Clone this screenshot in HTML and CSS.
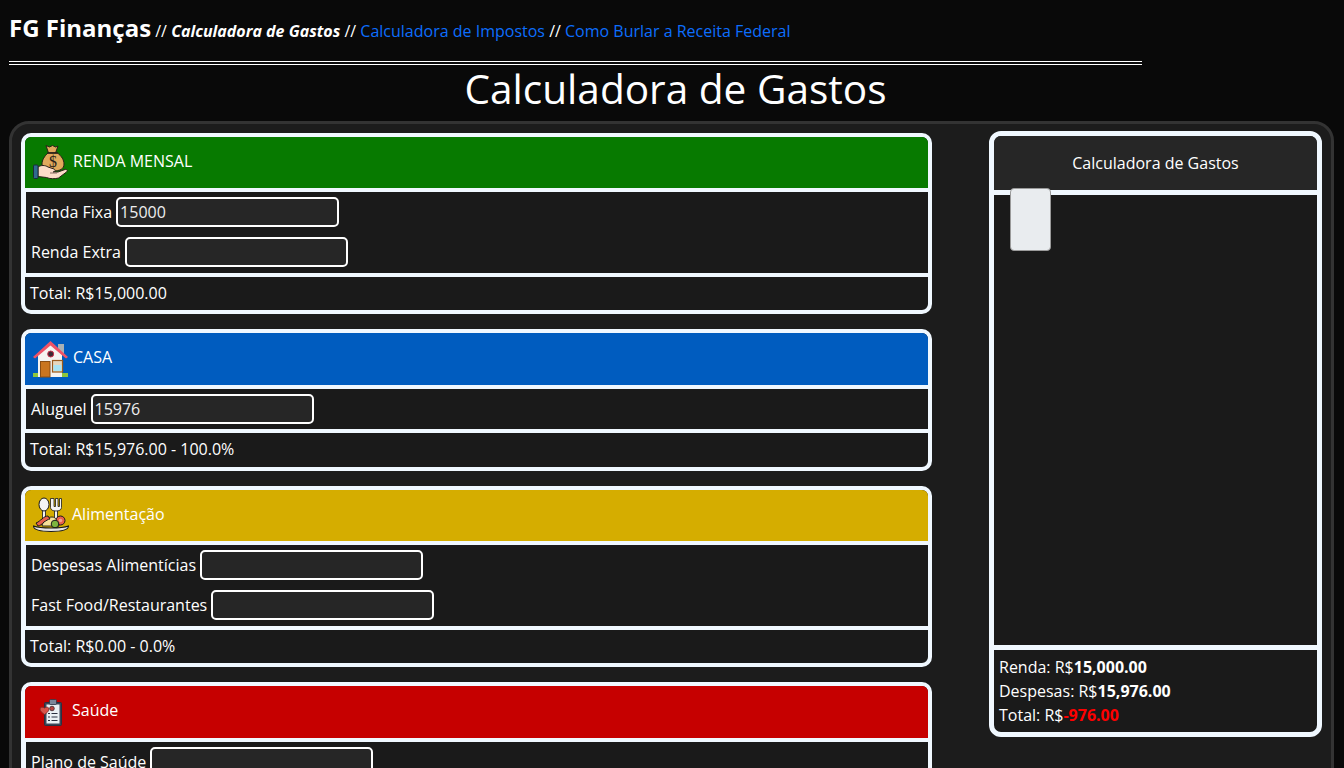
FILE: index.html
```html
<!DOCTYPE html>
<html lang="en">
<head>
    <meta charset="UTF-8">
    <title>Calculadora de Gastos</title>
    <link rel="stylesheet" href="styles.css">
</head>
<body>
    <!-- Top navigation -->
    <header class="site-header">
        <nav class="site-nav">
            <strong class="brand">FG Finanças</strong> // <b><i>Calculadora de Gastos</i></b> // <a href="#">Calculadora de Impostos</a> // <a href="#">Como Burlar a Receita Federal</a>
        </nav>
        <hr class="double-rule">
    </header>
    <h1 class="page-title">Calculadora de Gastos</h1>

    <main class="panel">
        <section class="categories">
            <!-- Renda -->
            <div class="card">
                <div class="card-header header-green">
                    <svg class="card-icon" viewBox="0 0 36 38">
                        <path d="M13 2.500l3.500 1.500 3-1.500 3 1.500 2.500-1-2.500 7h-7z" fill="#e0a95c" stroke="#2a2018" stroke-width="1"/>
                        <path d="M15 10h9.500c4 3 6.500 7 6.500 11 0 5-4 7-11 7s-11-2-11-7c0-4 2.500-8 6-11z" fill="#e0a95c" stroke="#2a2018" stroke-width="1"/>
                        <path d="M14.500 10h10.500" stroke="#2a2018" stroke-width="1.600"/>
                        <text class="bag-sign" x="20" y="24" text-anchor="middle">$</text>
                        <path d="M5 24c3-2 7-2 10 0l6 2c2 1 1 3-1 3h5l7-2.500c2-.5 3 1 1.500 2.500l-8 6c-3 1-9 1-12-.5l-8.500-1z" fill="#fbdcc8" stroke="#2a2018" stroke-width="1"/>
                        <path d="M17 30h7" stroke="#8a6a60" stroke-width="1.200"/>
                        <rect x="0.500" y="22" width="4.500" height="13.500" rx="1" fill="#2f6a8f" stroke="#1c2c38"/>
                    </svg>
                    <span>RENDA MENSAL</span>
                </div>
                <div class="card-body">
                    <div class="field"><label>Renda Fixa</label><input type="text" value="15000"></div>
                    <div class="field"><label>Renda Extra</label><input type="text"></div>
                </div>
                <div class="card-footer">Total: R$15,000.00</div>
            </div>

            <!-- Casa -->
            <div class="card">
                <div class="card-header header-blue">
                    <svg class="card-icon" viewBox="0 0 36 38">
                        <rect x="25" y="4" width="6" height="11" fill="#a9b1b5"/>
                        <rect x="0" y="33" width="35" height="4" fill="#8fc63c"/>
                        <path d="M17.500 4L29 15v22H5V15z" fill="#f5f3f0"/>
                        <path d="M0 17L17.500 1 35 17l-2 1.500L17.500 5.500 2 18.500z" fill="#ef5366"/>
                        <circle cx="17.700" cy="14" r="3" fill="#3b2a33" stroke="#c9304a"/>
                        <rect x="7.500" y="21.500" width="9.500" height="15.500" fill="#c9751f" stroke="#8a4e14"/>
                        <rect x="19.500" y="20.500" width="10" height="11.500" fill="#e6d6bc" stroke="#9a5a1c" stroke-width="1.200"/>
                        <rect x="20.500" y="25" width="8" height="6" fill="#a8e3f2"/>
                    </svg>
                    <span>CASA</span>
                </div>
                <div class="card-body">
                    <div class="field"><label>Aluguel</label><input type="text" value="15976"></div>
                </div>
                <div class="card-footer">Total: R$15,976.00 - 100.0%</div>
            </div>

            <!-- Alimentacao -->
            <div class="card">
                <div class="card-header header-yellow">
                    <svg class="card-icon" viewBox="0 0 36 38">
                        <rect x="9.500" y="12" width="3" height="12" fill="#f4f4f4" stroke="#1a1a1a" stroke-width=".8"/>
                        <ellipse cx="11" cy="8.500" rx="5" ry="6.500" fill="#f4f4f4" stroke="#1a1a1a"/>
                        <rect x="21.500" y="13" width="3" height="11" fill="#f4f4f4" stroke="#1a1a1a" stroke-width=".8"/>
                        <path d="M17.500 2.500v9c0 2.500 2.500 3.500 5.500 3.500s5.500-1 5.500-3.500v-9h-2v8h-1.500v-8h-2.500v8h-1.500v-8z" fill="#f4f4f4" stroke="#1a1a1a" stroke-width=".8"/>
                        <path d="M9 30c1-5 5-9 10-9 4 0 6 4 7 9z" fill="#f6e29a" stroke="#1a1a1a" stroke-width=".9"/>
                        <path d="M3 27c3-1 4-3 6-4 2-2 4-3 6-3l2 3c-2 0-4 2-6 3-2 2-4 4-6 4z" fill="#e8604c" stroke="#1a1a1a"/>
                        <circle cx="27.500" cy="24.500" r="4.500" fill="#e8604c" stroke="#1a1a1a"/>
                        <circle cx="27.500" cy="24.500" r="1.800" fill="#f2a08f"/>
                        <circle cx="22" cy="28" r="3.800" fill="#7db53f" stroke="#1a1a1a"/>
                        <path d="M.5 30c0 4 7 5.500 17.500 5.500s17.500-1.500 17.500-5.500c-4 1.500-9 2-17.500 2S4.500 31.500.5 30z" fill="#e4e4e4" stroke="#1a1a1a" stroke-width="1.100"/>
                    </svg>
                    <span>Alimentação</span>
                </div>
                <div class="card-body">
                    <div class="field"><label>Despesas Alimentícias</label><input type="text"></div>
                    <div class="field"><label>Fast Food/Restaurantes</label><input type="text"></div>
                </div>
                <div class="card-footer">Total: R$0.00 - 0.0%</div>
            </div>

            <!-- Saude -->
            <div class="card">
                <div class="card-header header-red">
                    <svg class="card-icon" viewBox="0 0 36 38">
                        <rect x="11.500" y="9.500" width="17" height="23" rx="1" fill="#3c4658" stroke="#2a3040"/>
                        <rect x="13.500" y="11.500" width="13" height="19" fill="#eaf0f4"/>
                        <rect x="16.500" y="6.500" width="7" height="5" rx="1" fill="#7b8699" stroke="#2a3040" stroke-width=".7"/>
                        <circle cx="19" cy="15.500" r="2.300" fill="#b8443e" stroke="#3a2a30" stroke-width=".8"/>
                        <path d="M15 20.500h2M18.500 20.500h6M15 24h2M18.500 24h6M15 27.500h2M18.500 27.500h6" stroke="#2a3040" stroke-width="1"/>
                        <path d="M11.500 21.500c-1.500-1-4.500-3-4.500-5.500 0-2 3-2.500 4.500-1 1.500-1.500 4.500-1 4.500 1 0 2.500-3 4.500-4.500 5.500z" fill="#d9534a" stroke="#7c2a28" stroke-width=".8"/>
                    </svg>
                    <span>Saúde</span>
                </div>
                <div class="card-body">
                    <div class="field"><label>Plano de Saúde</label><input type="text"></div>
                </div>
                <div class="card-footer">Total: R$0.00 - 0.0%</div>
            </div>
        </section>

        <!-- Summary with chart area -->
        <aside class="summary">
            <div class="summary-header">Calculadora de Gastos</div>
            <div class="summary-chart">
                <div class="chart-bar"></div>
            </div>
            <div class="summary-footer">
                <div>Renda: R$<b>15,000.00</b></div>
                <div>Despesas: R$<b>15,976.00</b></div>
                <div>Total: R$<b class="negative">-976.00</b></div>
            </div>
        </aside>
    </main>
</body>
</html>
```

FILE: styles.css
```css
/* Base page */
body {
    margin: 0;
    padding: 0 10px 20px 9px;
    background-color: #090909;
    color: #fff;
    font-family: "Open Sans", sans-serif;
    font-size: 16px;
    line-height: 24px;
}
/* Navigation line with the double rule under it */
.site-header {
    padding-top: 11px;
}
.site-nav {
    height: 33px;
    line-height: 33px;
    white-space: nowrap;
}
.brand {
    font-size: 24px;
}
.site-nav a {
    color: #0d6efd;
    text-decoration: none;
}
.double-rule {
    width: 1133px;
    height: 0;
    margin: 17px 0 0;
    border: 0;
    border-top: 4px double #fff;
}
.page-title {
    margin: 0;
    padding-left: 8px;
    height: 56px;
    font-size: 40.600px;
    font-weight: 500;
    line-height: 48px;
    text-align: center;
}
/* Outer panel holding both columns */
.panel {
    display: flex;
    justify-content: space-between;
    align-items: flex-start;
    padding: 7px 9px 9px;
    background: #1c1c1c;
    border: 3px solid #333;
    border-radius: 20px;
}
.categories {
    width: 911px;
    margin-top: 1.600px;
}
/* Category cards */
.card {
    margin-bottom: 15px;
    border: 4px solid aliceblue;
    border-radius: 10px;
    background: #1a1a1a;
    overflow: hidden;
}
.card-header {
    display: flex;
    align-items: center;
    gap: 4px;
    height: 51.500px;
    padding-left: 8px;
    border-bottom: 4px solid aliceblue;
}
.card-header span {
    padding-bottom: 3px;
}
.header-yellow span,
.header-red span {
    margin-left: -1px;
}
.card-icon {
    width: 36px;
    height: 38px;
    flex: none;
}
.bag-sign {
    font-family: "Liberation Serif", serif;
    font-size: 16px;
    fill: #2a2018;
}
.header-green { background: #077a00; }
.header-blue { background: #005cbf; }
.header-yellow { background: #d5ad00; }
.header-red { background: #c60000; }
.card-body {
    padding: 5px 6px 5.500px 5px;
    border-left: 1px solid aliceblue;
    border-bottom: 4px solid aliceblue;
}
.field {
    display: flex;
    align-items: center;
    gap: 4px;
    height: 30px;
    margin-bottom: 10px;
}
.field:last-child {
    margin-bottom: 0;
}
.field input {
    box-sizing: border-box;
    width: 223px;
    height: 30px;
    padding: 0 2px;
    background: #262626;
    border: 2px solid #fff;
    border-radius: 5px;
    color: #eee;
    font: inherit;
}
.card-footer {
    height: 33.500px;
    padding-left: 5px;
    line-height: 33px;
}
/* Summary column */
.summary {
    box-sizing: border-box;
    width: 333px;
    height: 606px;
    display: flex;
    flex-direction: column;
    border: 5px solid aliceblue;
    border-radius: 12px;
    background: #1a1a1a;
    overflow: hidden;
}
.summary-header {
    height: 54px;
    flex: none;
    background: #262626;
    text-align: center;
    line-height: 54px;
}
.summary-chart {
    flex: 1;
    position: relative;
    border-top: 5px solid aliceblue;
    border-bottom: 5px solid aliceblue;
}
.chart-bar {
    position: absolute;
    left: 16px;
    top: -7px;
    width: 40.500px;
    height: 63px;
    box-sizing: border-box;
    background: #e9ecef;
    border: 1px solid #9a9a9a;
    border-radius: 4px;
}
.summary-footer {
    height: 82px;
    flex: none;
    box-sizing: border-box;
    padding: 5px 5px 0;
}
.negative {
    color: #f00;
}
```
